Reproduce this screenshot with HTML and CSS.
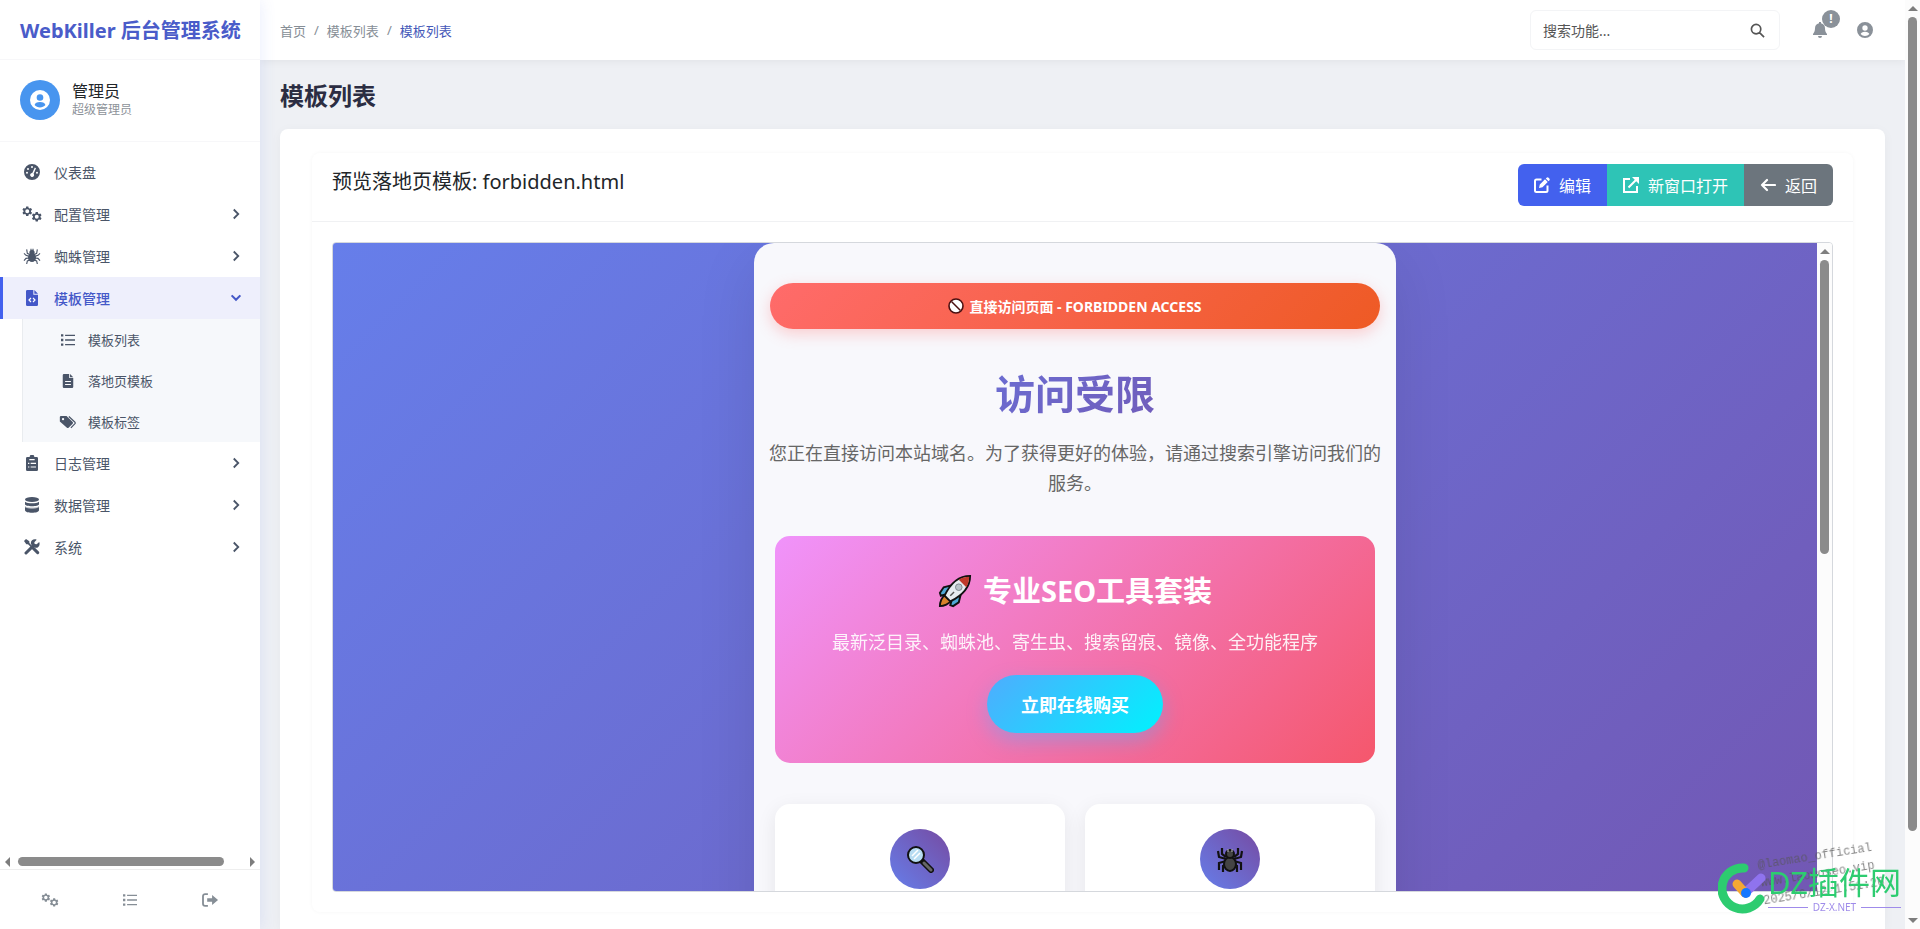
FILE: index.html
```
<!DOCTYPE html>
<html lang="zh-CN">
<head>
  <meta charset="UTF-8">
  <title>模板列表 - WebKiller 后台管理系统</title>
  <link rel="stylesheet" href="styles.css">
</head>
<body>
  <!-- 图标 -->
  <svg class="sprite" aria-hidden="true">
    <symbol id="i-user" viewBox="0 0 24 24">
      <path fill-rule="evenodd" d="M12 0a12 12 0 1 0 0 24 12 12 0 0 0 0-24zm0 5a4 4 0 1 1 0 8 4 4 0 0 1 0-8zm0 9.500c3.800 0 6 1.600 6.500 3.500-1.500 1.900-4 3-6.500 3s-5-1.100-6.500-3c.5-1.900 2.700-3.500 6.500-3.500z"/>
    </symbol>
    <symbol id="i-dash" viewBox="0 0 24 24">
      <path fill-rule="evenodd" d="M12 0a12 12 0 1 0 0 24 12 12 0 0 0 0-24zm0 3a1.500 1.500 0 1 1 0 3 1.500 1.500 0 0 1 0-3zM6 6a1.500 1.500 0 1 1 0 3 1.500 1.500 0 0 1 0-3zM4.500 11.500a1.500 1.500 0 1 1 0 3 1.500 1.500 0 0 1 0-3zm15 0a1.500 1.500 0 1 1 0 3 1.500 1.500 0 0 1 0-3zM16.200 5.200l1.800 1-3.600 8.300a3 3 0 1 1-2-1z"/>
    </symbol>
    <symbol id="i-gear" viewBox="0 0 24 24">
      <path fill-rule="evenodd" d="M9.500 1h5l.7 3.300 2 1.200 3.300-1 2.500 4.300-2.500 2.200v2l2.500 2.200-2.500 4.300-3.300-1-2 1.200-.7 3.300h-5l-.7-3.300-2-1.200-3.300 1L1 15.200 3.500 13v-2L1 8.800l2.500-4.300 3.300 1 2-1.200zM12 7.500a4.500 4.500 0 1 0 0 9 4.500 4.500 0 0 0 0-9z"/>
    </symbol>
    <symbol id="i-gears" viewBox="0 0 40 32">
      <use href="#i-gear" x="0" y="0" width="21" height="21"/>
      <use href="#i-gear" x="19" y="11" width="21" height="21"/>
    </symbol>
    <symbol id="i-spider" viewBox="0 0 24 24">
      <ellipse cx="12" cy="14.500" rx="6" ry="6.500"/>
      <circle cx="12" cy="7" r="4"/>
      <path fill="none" stroke="currentColor" stroke-width="1.700" d="M9 10L5 8 4 2M15 10l4-2 1-6M8 12.500L3 11 0 8M16 12.500l5-1.500 3-3M8 15l-5 .5L0 19M16 15l5 .5 3 3.500M9 18l-4 1.500L4 24M15 18l4 1.500 1 4.500M10.500 5V1M13.500 5V1"/>
    </symbol>
    <symbol id="i-filecode" viewBox="0 0 18 24">
      <path d="M2 0h9v7h7v15a2 2 0 0 1-2 2H2a2 2 0 0 1-2-2V2a2 2 0 0 1 2-2zm10.500 0L18 5.500h-5.500z"/>
      <path fill="none" stroke="#fff" stroke-width="1.800" d="M7.500 12L4.500 15l3 3M10.500 12l3 3-3 3"/>
    </symbol>
    <symbol id="i-file" viewBox="0 0 18 24">
      <path d="M2 0h9v7h7v15a2 2 0 0 1-2 2H2a2 2 0 0 1-2-2V2a2 2 0 0 1 2-2zm10.500 0L18 5.500h-5.500z"/>
      <path fill="none" stroke="#fff" stroke-width="1.800" d="M4 13h10M4 18h10"/>
    </symbol>
    <symbol id="i-list" viewBox="0 0 24 24">
      <path fill="none" stroke="currentColor" stroke-width="2.400" d="M7 4h17M7 12h17M7 20h17"/>
      <path d="M0 2h4v4H0zM0 10h4v4H0zM0 18h4v4H0z"/>
    </symbol>
    <symbol id="i-tags" viewBox="0 0 28 24">
      <path fill-rule="evenodd" d="M0 3.500A2 2 0 0 1 2 1.500h9.500L22 12a2 2 0 0 1 0 2.800l-7 7a2 2 0 0 1-2.800 0L0 11zM5.500 5a2 2 0 1 0 0 4 2 2 0 0 0 0-4z"/>
      <path fill="none" stroke="currentColor" stroke-width="2" d="M15.500 2.500L26 12.500c.7.7.7 1.600 0 2.300L19 22"/>
    </symbol>
    <symbol id="i-clip" viewBox="0 0 18 24">
      <path d="M2 3h3.500a3.500 3.500 0 0 1 7 0H16a2 2 0 0 1 2 2v17a2 2 0 0 1-2 2H2a2 2 0 0 1-2-2V5a2 2 0 0 1 2-2z"/>
      <path fill="none" stroke="#fff" stroke-width="1.800" d="M3 12.500h2M7 12.500h8M3 18h2M7 18h8M5 7h8"/>
    </symbol>
    <symbol id="i-db" viewBox="0 0 21 24">
      <ellipse cx="10.500" cy="3.700" rx="10.500" ry="3.700"/>
      <path d="M0 7c4 3 17 3 21 0v4c0 4-21 4-21 0zM0 14c4 3 17 3 21 0v6c0 5-21 5-21 0z"/>
      <path fill="none" stroke="#fff" stroke-width="1" d="M0 14.500c4 3 17 3 21 0"/>
    </symbol>
    <symbol id="i-tools" viewBox="0 0 24 24">
      <path fill="none" stroke="currentColor" stroke-width="4.500" stroke-linecap="round" d="M3 21l10-10M14.500 14.500l6 6"/>
      <path fill="none" stroke="currentColor" stroke-width="2.500" d="M4 4l10 10"/>
      <path d="M0 3l3-3 5 3.500V7L6.500 8H3.500zM22.800 4.500L19 8l-3-.5L15.500 5 19 1c-5-2-10 2-8.500 7l5.500 5c5 1.500 9-3.500 6.800-8.500z"/>
    </symbol>
    <symbol id="i-right" viewBox="0 0 12 16">
      <path fill="none" stroke="currentColor" stroke-width="2.400" d="M3 2l6 6-6 6"/>
    </symbol>
    <symbol id="i-down" viewBox="0 0 16 12">
      <path fill="none" stroke="currentColor" stroke-width="2.400" d="M3 3l5 5 5-5"/>
    </symbol>
    <symbol id="i-search" viewBox="0 0 16 16">
      <path fill="none" stroke="currentColor" stroke-width="1.800" d="M6.500 1.500a5 5 0 1 0 0 10 5 5 0 0 0 0-10zM10.200 10.200L15 15"/>
    </symbol>
    <symbol id="i-bell" viewBox="0 0 21 24">
      <path d="M9 0h3v2c4 .8 6 3.500 6 7.500 0 4 1 6 3 8.500v1.500H0V18c2-2.500 3-4.500 3-8.500 0-4 2-6.700 6-7.500zM7.500 21h6a3 3 0 0 1-6 0z"/>
    </symbol>
    <symbol id="i-exit" viewBox="0 0 24 20">
      <path fill="none" stroke="currentColor" stroke-width="2.600" d="M9 1.500H5a3 3 0 0 0-3 3v11a3 3 0 0 0 3 3h4"/>
      <path d="M8 7.500h7V3l8.500 7L15 17v-4.500H8z"/>
    </symbol>
    <symbol id="i-edit" viewBox="0 0 16 16">
      <path fill="none" stroke="currentColor" stroke-width="2" d="M7.500 2.500h-5A1.500 1.500 0 0 0 1 4v9.500A1.500 1.500 0 0 0 2.500 15H12a1.500 1.500 0 0 0 1.500-1.500v-5"/>
      <path d="M5 11l.8-3.500L11 2.300 13.700 5 8.500 10.200zM11.800 1.500l.8-.8a1.500 1.500 0 0 1 2 0l.7.7a1.500 1.500 0 0 1 0 2l-.8.8z"/>
    </symbol>
    <symbol id="i-open" viewBox="0 0 16 16">
      <path fill="none" stroke="currentColor" stroke-width="2" d="M7 2H1v13h13V9M5.500 10.500L14 2"/>
      <path d="M9 0h7v7z"/>
    </symbol>
    <symbol id="i-back" viewBox="0 0 16 16">
      <path fill="none" stroke="currentColor" stroke-width="2.200" stroke-linecap="round" stroke-linejoin="round" d="M15 8H2M7 3L2 8l5 5"/>
    </symbol>
  </svg>

  <div class="app">
    <aside class="sidebar">
      <div class="brand">WebKiller 后台管理系统</div>
      <div class="user">
        <span class="avatar"><svg><use href="#i-user"/></svg></span>
        <div>
          <div class="user-name">管理员</div>
          <div class="user-role">超级管理员</div>
        </div>
      </div>
      <nav class="menu">
        <a href="#"><svg><use href="#i-dash"/></svg>仪表盘</a>
        <a href="#"><svg><use href="#i-gears"/></svg>配置管理<svg class="arrow"><use href="#i-right"/></svg></a>
        <a href="#"><svg><use href="#i-spider"/></svg>蜘蛛管理<svg class="arrow"><use href="#i-right"/></svg></a>
        <a href="#" class="active"><svg><use href="#i-filecode"/></svg>模板管理<svg class="arrow"><use href="#i-down"/></svg></a>
        <div class="submenu">
          <a href="#"><svg><use href="#i-list"/></svg>模板列表</a>
          <a href="#"><svg><use href="#i-file"/></svg>落地页模板</a>
          <a href="#"><svg><use href="#i-tags"/></svg>模板标签</a>
        </div>
        <a href="#"><svg><use href="#i-clip"/></svg>日志管理<svg class="arrow"><use href="#i-right"/></svg></a>
        <a href="#"><svg><use href="#i-db"/></svg>数据管理<svg class="arrow"><use href="#i-right"/></svg></a>
        <a href="#"><svg><use href="#i-tools"/></svg>系统<svg class="arrow"><use href="#i-right"/></svg></a>
      </nav>
      <div class="scroll-x"><i class="tri left"></i><span class="track"><span class="thumb"></span></span><i class="tri right"></i></div>
      <div class="side-footer">
        <a href="#" aria-label="设置"><svg><use href="#i-gears"/></svg></a>
        <a href="#" aria-label="列表"><svg><use href="#i-list"/></svg></a>
        <a href="#" aria-label="退出"><svg><use href="#i-exit"/></svg></a>
      </div>
    </aside>

    <div class="main">
      <header class="topbar">
        <div class="breadcrumb">
          <a href="#">首页</a><span>/</span><a href="#">模板列表</a><span>/</span><a href="#" class="current">模板列表</a>
        </div>
        <div class="top-right">
          <div class="search">
            <input type="text" placeholder="搜索功能..." aria-label="搜索功能">
            <svg><use href="#i-search"/></svg>
          </div>
          <button class="icon-btn bell" aria-label="通知"><svg><use href="#i-bell"/></svg><span class="badge">!</span></button>
          <button class="icon-btn" aria-label="账户"><svg><use href="#i-user"/></svg></button>
        </div>
      </header>

      <main class="content">
        <h1>模板列表</h1>
        <div class="panel">
          <div class="card">
            <div class="card-header">
              <h2>预览落地页模板: forbidden.html</h2>
              <div class="btn-group">
                <button class="btn btn-edit"><svg><use href="#i-edit"/></svg>编辑</button>
                <button class="btn btn-open"><svg><use href="#i-open"/></svg>新窗口打开</button>
                <button class="btn btn-back"><svg><use href="#i-back"/></svg>返回</button>
              </div>
            </div>
            <div class="preview">
              <div class="landing">
                <div class="landing-box">
                  <div class="notice">
                    <svg viewBox="0 0 16 16"><circle cx="8" cy="8" r="7" fill="#fff" stroke="#4a1010" stroke-width="1.600"/><path d="M3.500 3.500l9 9" stroke="#4a1010" stroke-width="1.500"/></svg>
                    直接访问页面 - FORBIDDEN ACCESS
                  </div>
                  <h3>访问受限</h3>
                  <p class="desc">您正在直接访问本站域名。为了获得更好的体验，请通过搜索引擎访问我们的服务。</p>
                  <div class="promo">
                    <h4>
                      <svg viewBox="0 0 36 36">
                        <path d="M14 12L6 14l-4 6 1 3 7-2zM24 22l-2 8-6 4-3-1 2-7z" fill="#4fa9d6" stroke="#111" stroke-width="2"/>
                        <path d="M8 22c-4 2-6 8-6 12 4 0 10-2 12-6z" fill="#d9822b" stroke="#111" stroke-width="2"/>
                        <path d="M34 2C24 2 14 8 7 23l6 6C27 22 34 12 34 2z" fill="#e6ebf0" stroke="#111" stroke-width="2"/>
                        <path d="M33 3c-4 0-8 1-11 3l8 8c2-3 3-7 3-11z" fill="#c0392b"/>
                        <circle cx="22" cy="14" r="3.500" fill="#b9c2c9" stroke="#7c868e"/>
                        <path d="M13 23l4-4" stroke="#555" stroke-width="1.500"/>
                      </svg>
                      专业SEO工具套装
                    </h4>
                    <p>最新泛目录、蜘蛛池、寄生虫、搜索留痕、镜像、全功能程序</p>
                    <button class="buy">立即在线购买</button>
                  </div>
                  <div class="features">
                    <div class="feature">
                      <span class="feature-icon">
                        <svg viewBox="0 0 28 28"><path d="M16 16l9 9" stroke="#111" stroke-width="6" stroke-linecap="round"/><path d="M18 18l7 7" stroke="#666" stroke-width="3" stroke-linecap="round"/><circle cx="10" cy="10" r="8" fill="#b7dcf2" stroke="#111" stroke-width="2"/><path d="M6 11l6-6M8 14l6-6" stroke="#fff" stroke-width="1.500"/></svg>
                      </span>
                    </div>
                    <div class="feature">
                      <span class="feature-icon">
                        <svg viewBox="0 0 28 28"><path fill="none" stroke="#111" stroke-width="2.200" d="M10 12L6 9V3M18 12l4-3V3M10 14l-7-2-1-6M18 14l7-2 1-6M10 16l-7 2v7M18 16l7 2v7M11 19l-4 2v6M17 19l4 2v6"/><ellipse cx="14" cy="19" rx="6" ry="7" fill="#444" stroke="#111" stroke-width="2"/><circle cx="14" cy="9" r="4" fill="#444" stroke="#111" stroke-width="2"/><path d="M12 4v3M16 4v3" stroke="#ccc"/></svg>
                      </span>
                    </div>
                  </div>
                </div>
              </div>
              <div class="scroll-y"><i class="tri up"></i><span class="track"><span class="thumb"></span></span></div>
            </div>
          </div>
        </div>
      </main>
    </div>
    <div class="scroll-y page-scroll"><i class="tri up"></i><span class="track"><span class="thumb"></span></span><i class="tri down"></i></div>
  </div>

  <!-- 水印 -->
  <div class="stamp">@laomao_official<br>www.laowoseo.vip<br>2025/6/12 1:51:26</div>
  <div class="watermark">
    <svg viewBox="0 0 50 52">
      <path d="M26 5A20.500 20.500 0 1 0 42 36" fill="none" stroke="#2dcc70" stroke-width="9" stroke-linecap="round"/>
      <path d="M27 30L43 15" stroke="#8f73ee" stroke-width="9" stroke-linecap="round"/>
      <path d="M19 21l8 9" stroke="#f5a833" stroke-width="9" stroke-linecap="round"/>
      <circle cx="28" cy="30" r="5" fill="#1677ff"/>
    </svg>
    <div>
      <div class="wm-name">DZ插件网</div>
      <div class="wm-url">DZ-X.NET</div>
    </div>
  </div>
</body>
</html>
```
FILE: styles.css
```
* {
  box-sizing: border-box;
}
body {
  margin: 0;
  font-family: "Noto Sans", "Noto Sans CJK SC", sans-serif;
  color: #212529;
  background-color: #eef0f4;
  overflow: hidden;
}
h1, h2, h3, h4, p {
  margin: 0;
}
a {
  color: inherit;
  text-decoration: none;
}
button, input {
  font-family: inherit;
}
svg {
  fill: currentColor;
}
.sprite {
  display: none;
}
.app {
  display: flex;
  height: 100vh;
}

/* sidebar */
.sidebar {
  width: 260px;
  flex: none;
  display: flex;
  flex-direction: column;
  background-color: #fff;
  box-shadow: 0 0 16px rgba(67, 97, 238, 0.12);
  z-index: 1;
}
.brand {
  height: 60px;
  padding: 0 20px;
  line-height: 62px;
  font-size: 20px;
  font-weight: 700;
  color: #4a5cc9;
  white-space: nowrap;
  border-bottom: 1px solid #f7f7f9;
}
.user {
  display: flex;
  align-items: flex-start;
  gap: 12px;
  height: 82px;
  padding: 20px;
  border-bottom: 1px solid #f7f7f9;
}
.avatar {
  display: flex;
  align-items: center;
  justify-content: center;
  width: 40px;
  height: 40px;
  border-radius: 50%;
  background-color: #4895ef;
  color: #fff;
}
.avatar svg {
  width: 20px;
  height: 20px;
}
.user-name {
  font-size: 16px;
  line-height: 22px;
}
.user-role {
  font-size: 12px;
  line-height: 16px;
  color: #8d9299;
}
.menu {
  flex: 1;
  padding-top: 9px;
  color: #4a5568;
  font-size: 14px;
}
.menu a {
  display: flex;
  align-items: center;
  gap: 12px;
  height: 42px;
  padding: 0 17px 0 22px;
}
.menu svg {
  width: 20px;
  height: 16px;
}
.menu .arrow {
  width: 14px;
  height: 12px;
  margin-left: auto;
}
.menu .active {
  padding-left: 19px;
  border-left: 3px solid #4361ee;
  background-color: #eeeffc;
  color: #4458c8;
  font-weight: 500;
}
.submenu {
  margin-left: 22px;
  border-left: 1px solid #e9ecef;
  background-color: #f6f8fb;
  font-size: 13px;
}
.submenu a {
  height: 41px;
  gap: 10px;
  padding-left: 35px;
}
.submenu svg {
  height: 14px;
}
.side-footer {
  display: flex;
  height: 60px;
  padding: 0 10px;
  border-top: 1px solid #eee;
}
.side-footer a {
  flex: 1;
  display: flex;
  align-items: center;
  justify-content: center;
  color: #868e96;
}
.side-footer svg {
  width: 18px;
  height: 14px;
}

/* scrollbars */
.tri {
  border: 5px solid transparent;
}
.tri.up {
  border-top: 0;
  border-bottom-color: #7d7d7d;
}
.tri.down {
  border-bottom: 0;
  border-top-color: #7d7d7d;
}
.tri.left {
  border-left: 0;
  border-right-color: #7d7d7d;
}
.tri.right {
  border-right: 0;
  border-left-color: #7d7d7d;
}
.track {
  flex: 1;
}
.thumb {
  display: block;
  border-radius: 5px;
  background-color: #8b8b8b;
}
.scroll-x {
  display: flex;
  align-items: center;
  gap: 8px;
  height: 15px;
  padding: 0 5px;
}
.scroll-x .thumb {
  width: 92%;
  height: 9px;
}
.scroll-y {
  display: flex;
  flex-direction: column;
  align-items: center;
  flex: none;
  gap: 6px;
  width: 15px;
  padding: 6px 0;
  background-color: #fcfcfc;
}
.scroll-y .thumb {
  width: 9px;
  height: 47%;
}
.page-scroll .thumb {
  height: 91%;
}

/* topbar */
.main {
  flex: 1;
  min-width: 0;
  display: flex;
  flex-direction: column;
}
.topbar {
  display: flex;
  align-items: center;
  justify-content: space-between;
  flex: none;
  height: 60px;
  padding: 0 32px 0 20px;
  background-color: #fff;
  box-shadow: 0 2px 8px rgba(0, 0, 0, 0.05);
}
.breadcrumb {
  display: flex;
  gap: 8px;
  font-size: 13px;
  color: #868e96;
}
.breadcrumb .current {
  color: #4458b8;
}
.top-right {
  display: flex;
  align-items: center;
}
.search {
  display: flex;
  align-items: center;
  width: 250px;
  height: 40px;
  margin-right: 32px;
  padding: 0 14px 0 12px;
  border: 1px solid #f3f4f6;
  border-radius: 6px;
}
.search input {
  flex: 1;
  min-width: 0;
  padding: 0;
  border: 0;
  outline: 0;
  font-size: 14px;
}
.search input::placeholder {
  color: #555;
}
.search svg {
  width: 15px;
  height: 15px;
  color: #555;
}
.icon-btn {
  position: relative;
  display: flex;
  padding: 0;
  border: 0;
  background: none;
  color: #8a9199;
}
.icon-btn svg {
  width: 16px;
  height: 16px;
}
.bell {
  margin-right: 29px;
}
.badge {
  position: absolute;
  left: 10px;
  top: -12px;
  width: 18px;
  height: 18px;
  border-radius: 50%;
  background-color: #8a9199;
  color: #fff;
  font-size: 12px;
  font-weight: 700;
  line-height: 18px;
  text-align: center;
}

/* content */
.content {
  flex: 1;
  min-height: 0;
  display: flex;
  flex-direction: column;
  padding: 18px 20px 0;
}
h1 {
  margin-bottom: 15px;
  font-size: 24px;
  line-height: 36px;
  color: #2b2d42;
}
.panel {
  flex: 1;
  padding: 24px 32px 0;
  border-radius: 8px 8px 0 0;
  background-color: #fff;
  box-shadow: 0 2px 12px rgba(0, 0, 0, 0.04);
}
.card {
  padding-bottom: 20px;
  border-radius: 8px;
  box-shadow: 0 0 4px rgba(0, 0, 0, 0.04);
}
.card-header {
  display: flex;
  justify-content: space-between;
  margin-bottom: 20px;
  padding: 11px 20px 15px;
  border-bottom: 1px solid #f0f1f3;
}
h2 {
  font-size: 20px;
  font-weight: 400;
  line-height: 36px;
}
.btn-group {
  display: flex;
  border-radius: 6px;
  overflow: hidden;
}
.btn {
  display: flex;
  align-items: center;
  gap: 9px;
  height: 42px;
  padding: 0 16px;
  border: 0;
  color: #fff;
  font-size: 16px;
}
.btn svg {
  width: 16px;
  height: 16px;
}
.btn-edit {
  background-color: #4361ee;
}
.btn-open {
  background-color: #2ec4b6;
}
.btn-back {
  background-color: #6c757d;
}
.preview {
  display: flex;
  height: 650px;
  margin: 0 20px;
  border: 1px solid #d5d8dd;
  border-radius: 4px;
  overflow: hidden;
}

/* landing page inside the preview */
.landing {
  flex: 1;
  background: linear-gradient(135deg, #667eea 0%, #764ba2 100%) 0 0 / 100% 1350px;
}
.landing-box {
  width: 642px;
  height: 1350px;
  margin: 0 auto;
  padding: 40px 14px;
  border-radius: 20px;
  background-color: #f8f8fc;
  box-shadow: 0 20px 60px rgba(0, 0, 0, 0.1);
  text-align: center;
}
.notice {
  display: flex;
  align-items: center;
  justify-content: center;
  gap: 5px;
  height: 46px;
  margin: 0 2px;
  border-radius: 25px;
  background: linear-gradient(135deg, #ff6b6b, #ee5a24);
  box-shadow: 0 5px 15px rgba(255, 107, 107, 0.3);
  color: #fff;
  font-size: 14px;
  font-weight: 700;
}
.notice svg {
  width: 16px;
  height: 16px;
}
h3 {
  margin-top: 35px;
  font-size: 40px;
  line-height: 60px;
  background: linear-gradient(135deg, #667eea, #764ba2);
  -webkit-background-clip: text;
  background-clip: text;
  color: transparent;
}
.desc {
  margin-top: 14px;
  font-size: 18px;
  line-height: 30px;
  color: #666;
}
.promo {
  margin: 38px 7px 0;
  padding: 31px 20px 30px;
  border-radius: 15px;
  background: linear-gradient(135deg, #f093fb, #f5576c);
  color: #fff;
}
h4 {
  display: flex;
  align-items: center;
  justify-content: center;
  gap: 11px;
  font-size: 29px;
  line-height: 48px;
}
h4 svg {
  width: 34px;
  height: 34px;
}
.promo p {
  margin-top: 12px;
  font-size: 18px;
  line-height: 30px;
  opacity: 0.9;
}
.buy {
  height: 58px;
  margin-top: 18px;
  padding: 0 34px;
  border: 0;
  border-radius: 29px;
  background: linear-gradient(135deg, #4facfe, #00f2fe);
  box-shadow: 0 8px 20px rgba(79, 172, 254, 0.4);
  color: #fff;
  font-size: 18px;
  font-weight: 700;
}
.features {
  display: grid;
  grid-template-columns: 1fr 1fr;
  gap: 20px;
  margin: 41px 7px 0;
}
.feature {
  height: 200px;
  padding-top: 25px;
  border-radius: 15px;
  background-color: #fff;
  box-shadow: 0 5px 20px rgba(0, 0, 0, 0.08);
}
.feature-icon {
  display: flex;
  align-items: center;
  justify-content: center;
  width: 60px;
  height: 60px;
  margin: 0 auto;
  border-radius: 50%;
  background: linear-gradient(45deg, #667eea, #764ba2);
}
.feature-icon svg {
  width: 28px;
  height: 28px;
}

/* watermark */
.stamp {
  position: fixed;
  right: 38px;
  bottom: 28px;
  z-index: 2;
  font-family: "Liberation Mono", monospace;
  font-size: 12px;
  line-height: 18px;
  color: #555;
  opacity: 0.7;
  transform: rotate(-9deg);
}
.watermark {
  position: fixed;
  right: 19px;
  bottom: 14px;
  z-index: 3;
  display: flex;
  align-items: center;
}
.watermark svg {
  width: 50px;
  height: 52px;
}
.wm-name {
  color: #2dcc70;
  font-size: 31px;
  line-height: 36px;
}
.wm-url {
  display: flex;
  align-items: center;
  gap: 5px;
  color: #9f8bea;
  font-size: 10px;
  line-height: 14px;
}
.wm-url::before,
.wm-url::after {
  content: "";
  flex: 1;
  height: 1px;
  background-color: #9f8bea;
}
```
